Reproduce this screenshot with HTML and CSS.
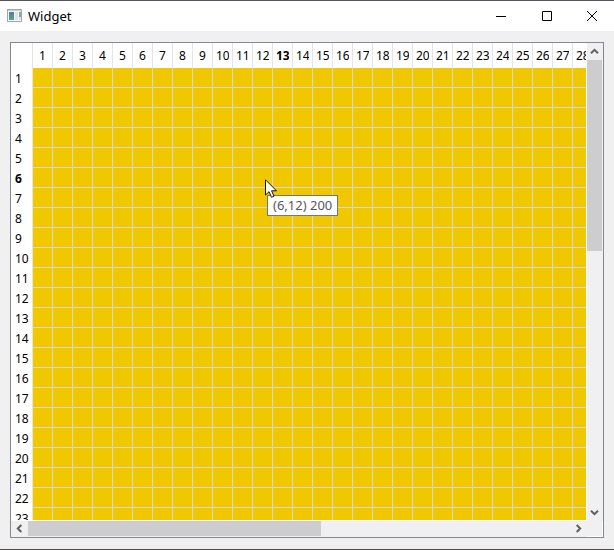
FILE: index.html
```
<!DOCTYPE html>
<html lang="en">
<head>
<meta charset="utf-8">
<title>Widget</title>
<link rel="stylesheet" href="styles.css">
</head>
<body>
<div class="window">
  <header class="titlebar">
    <svg class="app-icon" width="16" height="16" viewBox="0 0 16 16" aria-hidden="true">
      <defs>
        <linearGradient id="pane" x1="0" y1="0" x2="0" y2="1">
          <stop offset="0" stop-color="#4b7fa8"/>
          <stop offset="1" stop-color="#5aa583"/>
        </linearGradient>
      </defs>
      <rect x="0.5" y="1.5" width="14" height="12" fill="#f4f5f6" stroke="#a2a9ae"/>
      <rect x="1" y="2" width="13" height="1" fill="#c5cbd0"/>
      <rect x="2" y="4" width="5" height="8" fill="url(#pane)"/>
      <rect x="8" y="4" width="3" height="8" fill="#dfe1e3"/>
      <rect x="12" y="4" width="2" height="5" fill="#7fae9f"/>
      <rect x="12" y="9" width="2" height="3" fill="#dfe1e3"/>
    </svg>
    <h1 class="title">Widget</h1>
    <div class="window-buttons">
      <button type="button" aria-label="Minimize"><svg width="10" height="10" viewBox="0 0 10 10"><path d="M0 5.5H10"/></svg></button>
      <button type="button" aria-label="Maximize"><svg width="10" height="10" viewBox="0 0 10 10"><path d="M.5 .5H9.5V9.5H.5Z"/></svg></button>
      <button type="button" aria-label="Close"><svg width="10" height="10" viewBox="0 0 10 10"><path d="M0 0L10 10M10 0L0 10"/></svg></button>
    </div>
  </header>
  <main class="content">
    <div class="table-view">
      <div class="viewport">
        <table class="grid" id="grid"></table>
        <div class="tooltip" role="tooltip">(6,12) 200</div>
        <svg class="pointer" width="13" height="20" viewBox="0 0 13 20" aria-hidden="true"><path d="M.5 .8V16L4 12.7L6.5 18.3L9 17.2L6.6 11.8H11.5Z" fill="#fff" stroke="#111"/></svg>
      </div>
      <div class="scrollbar vertical">
        <button type="button" aria-label="Scroll up"><svg width="9" height="9" viewBox="0 0 9 9"><path d="M1 6.3L4.5 2.8L8 6.3"/></svg></button>
        <div class="track"><div class="thumb"></div></div>
        <button type="button" aria-label="Scroll down"><svg width="9" height="9" viewBox="0 0 9 9"><path d="M1 2.7L4.5 6.2L8 2.7"/></svg></button>
      </div>
      <div class="scrollbar horizontal">
        <button type="button" aria-label="Scroll left"><svg width="9" height="9" viewBox="0 0 9 9"><path d="M6.3 1L2.8 4.5L6.3 8"/></svg></button>
        <div class="track"><div class="thumb"></div></div>
        <button type="button" aria-label="Scroll right"><svg width="9" height="9" viewBox="0 0 9 9"><path d="M2.7 1L6.2 4.5L2.7 8"/></svg></button>
      </div>
      <div class="corner"></div>
    </div>
  </main>
</div>
<script src="grid.js"></script>
</body>
</html>
```

FILE: styles.css
```
* {
  box-sizing: border-box;
}

body {
  margin: 0;
  font-family: "Noto Sans", "Open Sans", sans-serif;
  font-size: 12px;
  color: #000;
}

button {
  display: flex;
  align-items: center;
  justify-content: center;
  padding: 0;
  border: 0;
  background: none;
}

button svg {
  fill: none;
  stroke: #000;
}

.window {
  display: flex;
  flex-direction: column;
  height: 100vh;
  overflow: hidden;
  background: #f0f0f0;
  border-top: 1px solid #53535b;
  border-bottom: 1px solid #4c4a4e;
}

.titlebar {
  display: flex;
  align-items: center;
  flex: none;
  height: 30px;
  padding-left: 7px;
  gap: 5px;
  background: #fff;
}

.title {
  flex: 1;
  margin: 0;
  font-size: 13px;
  font-weight: 400;
  line-height: 28px;
}

.window-buttons {
  display: flex;
  height: 30px;
}

.window-buttons button {
  width: 46px;
}

.window-buttons button:last-child {
  width: 44px;
}

.content {
  display: flex;
  flex: 1;
  min-height: 0;
  padding: 11px 10px;
}

.table-view {
  display: grid;
  flex: 1;
  min-width: 0;
  grid-template-columns: minmax(0, 1fr) 16px;
  grid-template-rows: minmax(0, 1fr) 16px;
  border: 1px solid #828790;
}

.viewport {
  position: relative;
  overflow: hidden;
  background: #fff;
  border-right: 1px solid #fff;
  border-bottom: 1px solid #fff;
}

.grid {
  width: 0;
  table-layout: fixed;
  border-collapse: separate;
  border-spacing: 0;
  background: #fff;
}

.grid .row-head {
  width: 22px;
}

.grid .column {
  width: 20px;
}

.grid th,
.grid td {
  height: 20px;
  padding: 0;
  line-height: 18px;
  font-weight: 400;
  border-right: 1px solid #d8d8d8;
}

.grid thead th {
  height: 25px;
  border-right-color: #e5e5e5;
}

.grid thead span {
  display: flex;
  justify-content: safe center;
  margin: 0 3px;
  line-height: 25px;
  overflow: hidden;
}

.grid tbody th {
  padding: 2px 0 0 4px;
  text-align: left;
  border-right-color: #e5e5e5;
}

.grid td {
  background: #f0c800;
  border-bottom: 1px solid #d8d8d8;
}

.grid th.current {
  font-weight: 700;
}

.pointer {
  position: absolute;
  left: 254px;
  top: 136px;
}

.tooltip {
  position: absolute;
  left: 256px;
  top: 152px;
  padding: 0 5px;
  font-size: 13px;
  line-height: 19px;
  white-space: nowrap;
  color: #575757;
  background: #fff;
  border: 1px solid #767676;
}

.scrollbar {
  display: flex;
  background: #f0f0f0;
}

.scrollbar svg {
  stroke: #606060;
  stroke-width: 2;
}

.scrollbar button {
  flex: none;
  width: 15px;
  height: 17px;
}

.vertical {
  flex-direction: column;
}

.horizontal button {
  width: 17px;
  height: 15px;
}

.track {
  flex: 1;
}

.thumb {
  background: #cdcdcd;
}

.vertical .thumb {
  width: 15px;
  height: 43%;
}

.horizontal .thumb {
  width: 54%;
  height: 15px;
}

.corner {
  background: #f0f0f0;
  border-right: 1px solid #fff;
  border-bottom: 1px solid #fff;
}
```

FILE: grid.js
```
const COLUMNS = 28;
const ROWS = 23;
const current = { row: 6, column: 13 };

const range = (count) => Array.from({ length: count }, (_, i) => i + 1);
const mark = (on) => (on ? ' class="current"' : '');

const cols = '<colgroup><col class="row-head">' +
  range(COLUMNS).map(() => '<col class="column">').join('') + '</colgroup>';

const head = '<thead><tr><th></th>' +
  range(COLUMNS).map((c) => `<th scope="col"${mark(c === current.column)}><span>${c}</span></th>`).join('') +
  '</tr></thead>';

const body = '<tbody>' + range(ROWS).map((r) =>
  `<tr><th scope="row"${mark(r === current.row)}>${r}</th>` + '<td></td>'.repeat(COLUMNS) + '</tr>'
).join('') + '</tbody>';

document.getElementById('grid').innerHTML = cols + head + body;
```
